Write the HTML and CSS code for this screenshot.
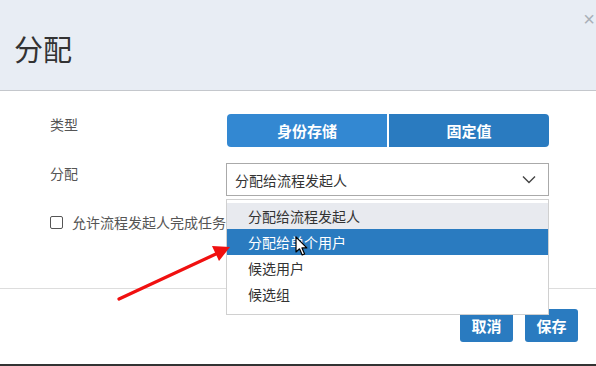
FILE: index.html
```html
<!DOCTYPE html>
<html lang="zh-CN">
<head>
    <meta charset="UTF-8">
    <title>分配</title>
    <link rel="stylesheet" href="styles.css">
</head>
<body>
    <div class="modal">
        <div class="modal-header">
            <h1>分配</h1>
            <span class="close">&times;</span>
        </div>
        <div class="modal-body">
            <div class="form-row">
                <label>类型</label>
                <div class="toggle">
                    <button class="toggle-btn active">身份存储</button>
                    <button class="toggle-btn">固定值</button>
                </div>
            </div>
            <div class="form-row">
                <label>分配</label>
                <div class="select">
                    <span>分配给流程发起人</span>
                    <svg class="chevron" width="14" height="9" viewBox="0 0 14 9"><path d="M1 1.5 L7 7.5 L13 1.5" fill="none" stroke="#444" stroke-width="1.4"/></svg>
                </div>
            </div>
            <div class="check-row">
                <span class="checkbox"></span>
                <span class="check-text">允许流程发起人完成任务</span>
            </div>
        </div>
        <div class="modal-footer">
            <button class="btn">取消</button>
            <button class="btn">保存</button>
        </div>

        <ul class="dropdown">
            <li class="hover">分配给流程发起人</li>
            <li class="selected">分配给单个用户</li>
            <li>候选用户</li>
            <li>候选组</li>
        </ul>

        <svg class="arrow" width="596" height="366" viewBox="0 0 596 366">
            <line x1="119" y1="299" x2="218" y2="253" stroke="#f01010" stroke-width="3.2" stroke-linecap="round"/>
            <polygon points="230,247 212,246 219,261" fill="#f01010"/>
        </svg>
        <svg class="cursor" width="14" height="21" viewBox="0 0 14 21">
            <path d="M1 1 L1 16 L4.5 12.8 L7.2 19 L9.6 18 L7 11.9 L11.8 11.9 Z" fill="#fff" stroke="#000" stroke-width="1.2" stroke-linejoin="round"/>
        </svg>
    </div>
</body>
</html>
```

FILE: styles.css
```css
body {
    margin: 0;
    font-family: "Noto Sans CJK SC", "Liberation Sans", sans-serif;
    background: #fff;
}

.modal {
    position: relative;
    width: 596px;
    height: 366px;
    overflow: hidden;
    background: #fff;
    border-bottom: 2px solid #333;
    box-sizing: border-box;
}

.modal-header {
    position: relative;
    height: 90px;
    background: #e8edf4;
    border-bottom: 1px solid #c4c7cc;
    display: flex;
    align-items: center;
    padding-left: 14px;
}

.modal-header h1 {
    margin: 0;
    font-size: 29px;
    font-weight: normal;
    color: #333;
    padding-top: 6px;
}

.close {
    position: absolute;
    right: 1px;
    top: 8px;
    font-size: 20px;
    color: #aab0b8;
    font-family: "Liberation Sans", sans-serif;
}

.modal-body {
    height: 197px;
    padding-top: 23px;
    box-sizing: border-box;
}

.form-row {
    display: flex;
    align-items: flex-start;
    margin-bottom: 16px;
}

.form-row label {
    width: 226px;
    flex-shrink: 0;
    padding-left: 50px;
    box-sizing: border-box;
    font-size: 14px;
    color: #555;
    line-height: 20px;
}

.toggle {
    display: flex;
    width: 322px;
    margin-left: 1px;
    gap: 2px;
}

.toggle-btn {
    flex: 1;
    height: 33px;
    border: none;
    background: #2a7bc0;
    color: #fff;
    font-family: inherit;
    font-size: 15px;
    font-weight: bold;
    padding: 0;
}

.toggle-btn:first-child {
    border-radius: 4px 0 0 4px;
    background: #3388d2;
}

.toggle-btn:last-child {
    border-radius: 0 4px 4px 0;
}

.select {
    width: 323px;
    height: 33px;
    border: 1px solid #aaa;
    box-sizing: border-box;
    display: flex;
    align-items: center;
    justify-content: space-between;
    padding: 0 12px 0 8px;
    font-size: 14px;
    color: #333;
}

.check-row {
    display: flex;
    align-items: center;
    padding-left: 50px;
    margin-top: 16px;
}

.checkbox {
    width: 11px;
    height: 11px;
    border: 1px solid #555;
    border-radius: 2px;
    margin-right: 9px;
}

.check-text {
    font-size: 14px;
    color: #555;
}

.modal-footer {
    border-top: 1px solid #ddd;
    display: flex;
    justify-content: flex-end;
    gap: 12px;
    padding: 20px 18px 0 0;
}

.btn {
    width: 53px;
    height: 33px;
    border: none;
    border-radius: 3px;
    background: #2a7bc0;
    color: #fff;
    font-family: inherit;
    font-size: 15px;
    font-weight: bold;
    padding: 0;
}

.dropdown {
    position: absolute;
    left: 226px;
    top: 199px;
    width: 323px;
    height: 116px;
    margin: 0;
    padding: 3px 0 0;
    list-style: none;
    background: #fff;
    border: 1px solid #d0d0d0;
    box-sizing: border-box;
}

.dropdown li {
    height: 26px;
    line-height: 26px;
    padding-left: 21px;
    font-size: 14px;
    color: #333;
}

.dropdown li.hover {
    background: #e8eaef;
}

.dropdown li.selected {
    background: #2a7bc0;
    color: #fff;
}

.arrow {
    position: absolute;
    left: 0;
    top: 0;
    pointer-events: none;
}

.cursor {
    position: absolute;
    left: 295px;
    top: 236px;
}
```
